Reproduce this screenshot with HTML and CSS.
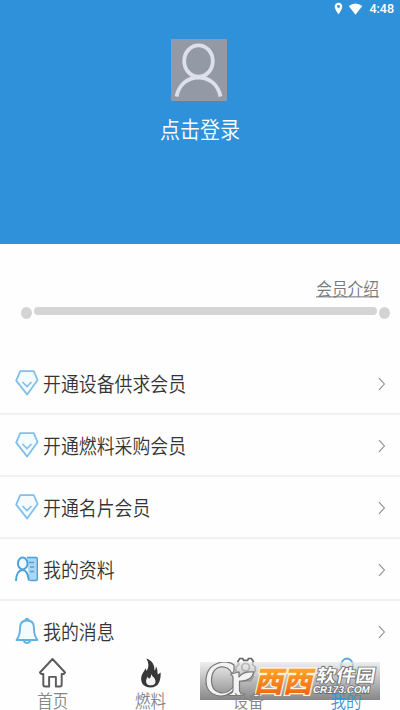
FILE: index.html
```html
<!DOCTYPE html>
<html lang="zh-CN">
<head>
<meta charset="utf-8">
<title>我的</title>
<link rel="stylesheet" href="styles.css">
</head>
<body>
<svg class="defs" width="0" height="0">
  <symbol id="diamond" viewBox="0 0 24 26">
    <path d="M5.2 1.2H18.8L22.6 10 12.2 24.6 1.2 10.6Z" fill="#f4fbff" stroke="#82bfe9" stroke-width="1.8" stroke-linejoin="round"/>
    <path d="M7.5 12L12 16.500 16.500 12" fill="none" stroke="#82bfe9" stroke-width="1.6"/>
  </symbol>
  <symbol id="chevron" viewBox="0 0 8 14">
    <path d="M1 1.200L6.400 7 1 12.800" fill="none" stroke="#8c8c8c" stroke-width="1.100"/>
  </symbol>
</svg>
<div class="screen">
  <header class="hero">
    <div class="status">
      <svg class="pin" viewBox="0 0 10 14"><path fill-rule="evenodd" d="M5 .5C2.500.5.8 2.400.8 4.800.8 8 5 13.500 5 13.500S9.200 8 9.200 4.800C9.200 2.400 7.500.5 5 .5ZM5 3.200A1.600 1.600 0 1 1 5 6.400 1.600 1.600 0 0 1 5 3.200Z" fill="#fff"/></svg>
      <svg class="wifi" viewBox="0 0 14 12"><path d="M.2 3Q7-2 13.800 3L7 11.800Z" fill="#fff"/></svg>
      <span class="time">4:48</span>
    </div>
    <svg class="avatar" viewBox="0 0 56 62"><rect width="56" height="62" fill="#939aa6"/><g fill="none" stroke="#dde0ec" stroke-width="3.800"><ellipse cx="27.500" cy="22" rx="14.300" ry="15.700"/><path d="M5.500 57.500C8 46 16 38.500 27.500 38.500S47 46 49.500 57.500"/></g></svg>
    <div class="login"><span class="tall">点击登录</span></div>
  </header>
  <section class="member">
    <a class="intro"><span class="tall">会员介绍</span></a>
    <div class="progress"><i class="dot"></i><i class="track"></i><i class="dot"></i></div>
  </section>
  <main class="list">
    <div class="row"><svg class="icon"><use href="#diamond"/></svg><span class="label tall">开通设备供求会员</span><svg class="arrow"><use href="#chevron"/></svg></div>
    <div class="row"><svg class="icon"><use href="#diamond"/></svg><span class="label tall">开通燃料采购会员</span><svg class="arrow"><use href="#chevron"/></svg></div>
    <div class="row"><svg class="icon"><use href="#diamond"/></svg><span class="label tall">开通名片会员</span><svg class="arrow"><use href="#chevron"/></svg></div>
    <div class="row"><svg class="icon" viewBox="0 0 24 26"><path d="M12 1H21Q22.500 1 22.500 2.500V23Q22.500 24.500 21 24.500H14" fill="#a9d8f6"/><path d="M12 1.500H21Q22.300 1.500 22.300 3V23Q22.300 24.500 21 24.500H15M14 6.500H19M15 11H19M15 15.500H19" fill="none" stroke="#4da0d8" stroke-width="1.500"/><ellipse cx="7.700" cy="7.500" rx="4.800" ry="6" fill="#eef9ff" stroke="#4da0d8" stroke-width="2"/><path d="M1 25C1.200 18 4 14 7.700 14S13 18 14 24.500" fill="#fff" stroke="#4da0d8" stroke-width="2"/></svg><span class="label tall">我的资料</span><svg class="arrow"><use href="#chevron"/></svg></div>
    <div class="row"><svg class="icon" viewBox="0 0 24 26"><path d="M12 2.500C7 2.500 5 6 5 10C5 16 4 19 1.500 22H22.500C20 19 19 16 19 10C19 6 17 2.500 12 2.500Z" fill="#f4fbff" stroke="#65b2e2" stroke-width="1.900" stroke-linejoin="round"/><path d="M10 2Q12-.5 14 2M8.500 23Q12 27 15.500 23" fill="none" stroke="#65b2e2" stroke-width="1.900"/></svg><span class="label tall">我的消息</span><svg class="arrow"><use href="#chevron"/></svg></div>
  </main>
  <nav class="tabs">
    <div class="tab"><svg class="tabicon" viewBox="0 0 30 32"><path d="M2 15.500L15 1.500 28 15.500 26.500 17H24.500V28.500Q24.500 30 23 30H18.500V20H11.500V30H7Q5.500 30 5.500 28.500V17H3.500Z" fill="none" stroke="#5b5b5b" stroke-width="2" stroke-linejoin="round"/></svg><span class="tall">首页</span></div>
    <div class="tab"><svg class="tabicon" viewBox="0 0 30 32"><path d="M10.500 1C17 3 19.500 8 19 13.500C20.500 12.500 20.500 10.500 20.500 9C22.500 11.500 22 15 22.500 17.500L25.500 15.500C25.800 24 23.500 31 15 31C7.500 31 4.500 26 5.500 20C6 16.500 8.500 14.500 10 11L11 14C13.500 10 13.500 5 10.500 1Z" fill="#383838"/><path d="M15.500 17C17 20 21 21.500 20 26C19 29.500 11.500 30 10.500 25.500C10 23 11.500 21.500 12 20L13.500 22Q16 20.500 15.500 17Z" fill="#f5f5f5"/></svg><span class="tall">燃料</span></div>
    <div class="tab"><svg class="tabicon" viewBox="0 0 30 32"><g fill="none" stroke="#666" stroke-width="1.800"><path d="M6 1H9L10 3H14L15 1H18L20 4 19 7 22 10V14L19 16 20 20 17 24H7L4 20 5 16 2 14V10L5 7 4 4Z"/><circle cx="12" cy="10" r="4"/></g></svg><span class="tall">设备</span></div>
    <div class="tab active"><svg class="tabicon" viewBox="0 0 30 32"><g fill="none" stroke="#55a9df" stroke-width="2"><ellipse cx="15.500" cy="9" rx="6.300" ry="8"/><path d="M4 31C5 22 9 18 15.500 18S26 22 27 31"/></g></svg><span class="tall">我的</span></div>
  </nav>
  <div class="watermark">
    <svg class="swirl" viewBox="0 0 60 38"><g fill="#f3f3f3" stroke="#777" stroke-width="1.200" stroke-linejoin="round"><path d="M34 9L32 12C29 2 12 1 11.500 18C11.500 32 25 35 33 25L35 27C25 39 6 35 6 19C6-1 28-3 34 3Z"/><path d="M31 12L39 10V15Q43 9 54 10Q51 20 39.500 19V28Q39.500 31 43 32V33.500H29V32Q33 31 33 28V16Q33 13 31 13Z"/></g></svg>
    <svg class="west" viewBox="0 0 66 32">
      <defs><linearGradient id="orange" x1="0" y1="0" x2="0" y2="1"><stop offset="0" stop-color="#ffc02c"/><stop offset="1" stop-color="#ee5b16"/></linearGradient></defs>
      <g transform="skewX(-13)"><text class="west-text" x="9" y="26.500" textLength="58" lengthAdjust="spacingAndGlyphs" fill="url(#orange)">西西</text></g>
    </svg>
    <svg class="brand" viewBox="0 0 68 38"><g transform="skewX(-10)"><text class="soft" x="7" y="20" textLength="59" lengthAdjust="spacingAndGlyphs">软件园</text><text class="site" x="6" y="31.500" textLength="57" lengthAdjust="spacingAndGlyphs">CR173.COM</text></g></svg>
  </div>
</div>
</body>
</html>
```
FILE: styles.css
```css
* { box-sizing: border-box; }
body { margin: 0; background: #fff; font-family: "Noto Sans CJK SC", sans-serif; font-weight: 350; }
.defs { position: absolute; }
.screen { position: relative; width: 400px; height: 710px; overflow: hidden; display: flex; flex-direction: column; background: #fefefe; }
.tall { display: inline-block; transform: scaleY(1.15); white-space: nowrap; }
.hero { height: 244px; flex: none; background: #2f91da; display: flex; flex-direction: column; align-items: center; color: #fff; }
.status { width: 100%; height: 39px; padding: 1px 6px 0 0; display: flex; justify-content: flex-end; align-items: flex-start; }
.pin { width: 9px; height: 13px; margin: 1px 5px 0 0; }
.wifi { width: 15px; height: 12px; margin: 2px 6px 0 0; }
.time { font: 500 12.5px/16px Roboto, sans-serif; }
.avatar { width: 56px; height: 62px; flex: none; margin-right: 2px; }
.login { margin-top: 13px; font-size: 20px; line-height: 30px; }
.member { height: 108.5px; flex: none; display: flex; flex-direction: column; }
.intro { align-self: flex-end; margin: 33px 21px 0 0; height: 24px; font-size: 15.7px; line-height: 24px; color: #767b7c; }
.intro .tall { height: 19px; border-bottom: 1px solid #858989; }
.progress { display: flex; margin: 6px 10px 0 21px; gap: 2px; align-items: flex-start; }
.dot { width: 11px; height: 12px; border-radius: 50%; background: #d3d3d3; }
.track { flex: 1; height: 8px; border-radius: 4px; background: #d5d5d5; }
.list { flex: none; }
.row { height: 62.2px; display: flex; align-items: center; padding: 2px 14px 0 15px; border-bottom: 2px solid #f1f1f1; }
.icon { width: 24px; height: 26px; flex: none; margin-bottom: 2px; overflow: visible; }
.label { margin: 0 0 2px 4px; font-size: 17.9px; line-height: 26px; color: #343434; }
.arrow { width: 8px; height: 14px; margin-left: auto; }
.tabs { position: absolute; left: 0; right: 0; bottom: 0; height: 55px; display: flex; padding: 0 5px 0 4px; background: #fefefe; }
.tab { flex: 1; display: flex; flex-direction: column; align-items: center; font-size: 15.5px; line-height: 15px; color: #858585; }
.tab .tall { position: relative; z-index: 2; }
.tabicon { width: 29px; height: 32px; margin: 2px 0 4px; flex: none; }
.active { color: #3b94d3; }
.watermark { position: absolute; z-index: 1; left: 200px; top: 662px; width: 180px; height: 38px; display: flex; background: linear-gradient(rgba(232,232,232,.7), rgba(105,105,105,.8)); }
.swirl { width: 60px; height: 38px; flex: none; }
.west { width: 66px; height: 32px; flex: none; margin: 3px 0 0 -9px; overflow: visible; }
.west-text { font: 900 29px "Noto Sans CJK SC", sans-serif; stroke: #fff3d8; stroke-width: 2.5px; paint-order: stroke; }
.brand { width: 68px; height: 38px; flex: none; margin-left: -5px; overflow: visible; }
.soft { font: 700 18px "Noto Sans CJK SC", sans-serif; }
.site { font: 700 10px "Liberation Sans", sans-serif; }
.soft, .site { fill: #fff; stroke: #666; stroke-width: 1.5px; paint-order: stroke; }
```
